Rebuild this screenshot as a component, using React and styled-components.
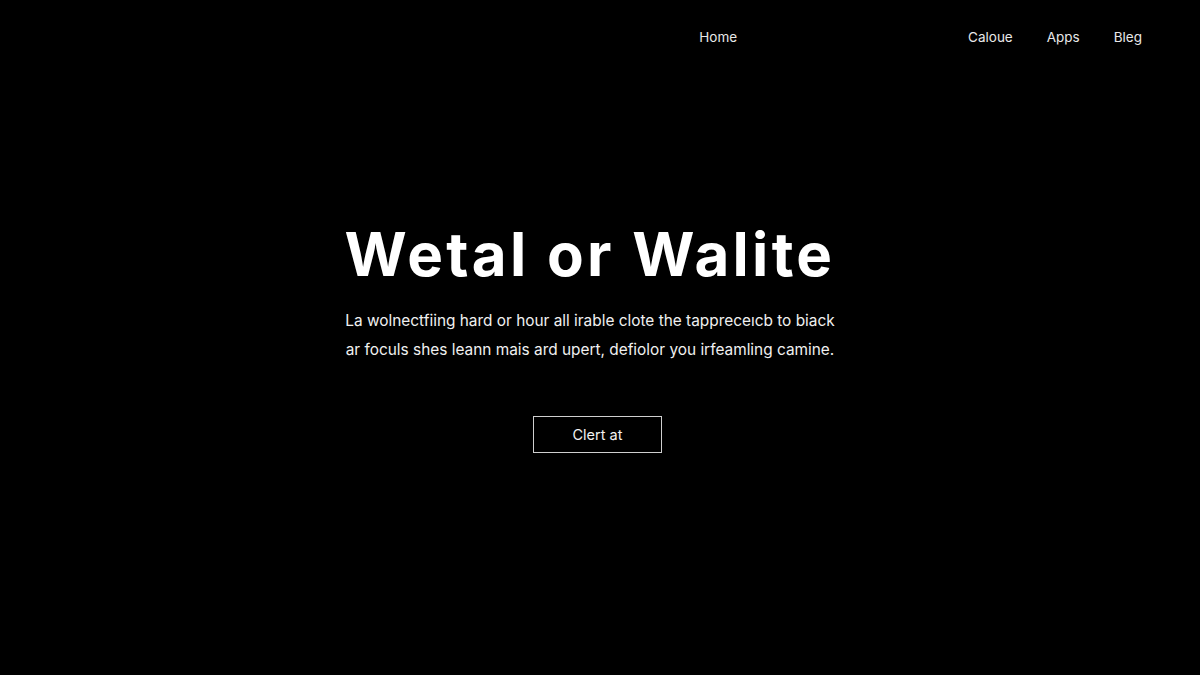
import styled, { createGlobalStyle } from "styled-components";

const Global = createGlobalStyle`
  html, body { margin: 0; padding: 0; background: #000; }
  body { font-family: Inter, "Liberation Sans", sans-serif; color: #fff; }
`;

const Page = styled.div`
  width: 1200px;
  height: 675px;
  background: #000;
  display: flex;
  flex-direction: column;
  overflow: hidden;
`;

const Nav = styled.nav`
  display: flex;
  justify-content: flex-end;
  align-items: center;
  height: 74px;
  padding: 0 58px 0 0;
  gap: 34px;
`;

const NavLink = styled.a`
  font-size: 13.5px;
  color: #e8e8e8;
  text-decoration: none;
  margin-right: ${(p) => (p.$spacer ? "197px" : "0")};
`;

const Hero = styled.main`
  display: flex;
  flex-direction: column;
  align-items: center;
  padding: 140px 20px 0 0;
`;

const Title = styled.h1`
  margin: 0;
  font-size: 60px;
  font-weight: 700;
  letter-spacing: 3.3px;
  line-height: 80px;
  color: #fff;
`;

const Lead = styled.p`
  margin: 12px 0 0;
  text-align: center;
  white-space: nowrap;
  font-size: 15.4px;
  line-height: 29px;
  color: #f0f0f0;
`;

const Button = styled.button`
  margin: 52px 0 0 15px;
  width: 129px;
  height: 37px;
  background: transparent;
  border: 1.5px solid #cfcfcf;
  color: #f2f2f2;
  font-family: inherit;
  font-size: 14.5px;
  cursor: pointer;
`;

export default function App() {
  return (
    <Page>
      <Global />
      <Nav>
        <NavLink href="#" $spacer>Home</NavLink>
        <NavLink href="#">Caloue</NavLink>
        <NavLink href="#">Apps</NavLink>
        <NavLink href="#">Bleg</NavLink>
      </Nav>
      <Hero>
        <Title>Wetal or Walite</Title>
        <Lead>
          La wolnectfiing hard or hour all irable clote the tappreceıcb to biack
          <br />
          ar foculs shes leann mais ard upert, defiolor you irfeamling camine.
        </Lead>
        <Button>Clert at</Button>
      </Hero>
    </Page>
  );
}
